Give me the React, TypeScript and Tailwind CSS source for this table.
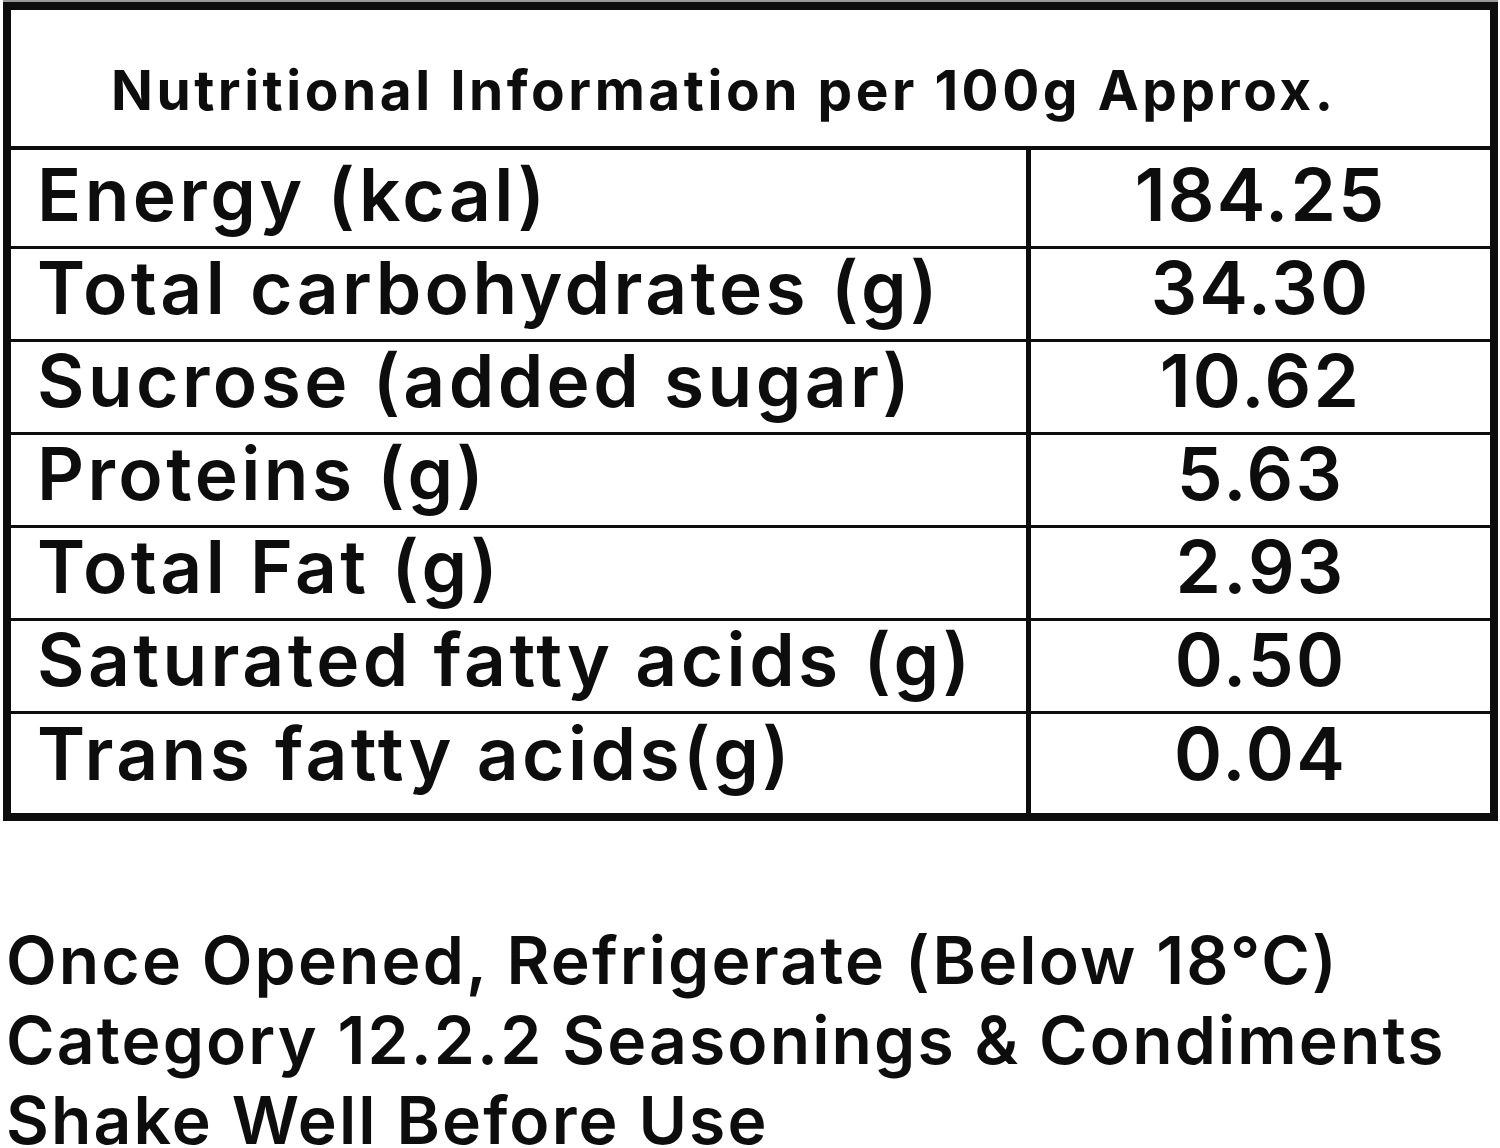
const rows: { label: string; value: string; rowCls: string; padCls: string }[] = [
  { label: "Energy (kcal)", value: "184.25", rowCls: "h-[99px] border-b-[3px]", padCls: "pt-[7px]" },
  { label: "Total carbohydrates (g)", value: "34.30", rowCls: "h-[93px] border-b-[3px]", padCls: "pt-[1px]" },
  { label: "Sucrose (added sugar)", value: "10.62", rowCls: "h-[93px] border-b-[3px]", padCls: "pt-[1px]" },
  { label: "Proteins (g)", value: "5.63", rowCls: "h-[93px] border-b-[3px]", padCls: "pt-[1px]" },
  { label: "Total Fat (g)", value: "2.93", rowCls: "h-[93px] border-b-[3px]", padCls: "pt-[1px]" },
  { label: "Saturated fatty acids (g)", value: "0.50", rowCls: "h-[93px] border-b-[3px]", padCls: "pt-[1px]" },
  { label: "Trans fatty acids(g)", value: "0.04", rowCls: "h-[99px] border-b-0", padCls: "pt-[2px]" },
];

export default function App() {
  return (
    <div className="w-[1500px] h-[1148px] overflow-hidden bg-white text-[#0d0d0d] [font-family:Inter,sans-serif]">
      <div className="ml-[3px] w-[1495px] h-[2px] bg-[#9a9a9a]" />
      <div className="ml-[3px] w-[1495px] border-[8px] border-[#0d0d0d]">
        <div className="h-[140px] border-b-[4px] border-[#0d0d0d] pl-[100px] pt-[47px] text-[55px] leading-[66px] font-bold tracking-[0.064em] whitespace-nowrap">
          Nutritional Information per 100g Approx.
        </div>
        {rows.map((r) => (
          <div key={r.label} className={`flex border-[#0d0d0d] ${r.rowCls}`}>
            <div className={`w-[1020px] border-r-[5px] border-[#0d0d0d] pl-[26px] text-[73px] leading-[76px] font-semibold tracking-[0.047em] whitespace-nowrap ${r.padCls}`}>
              {r.label}
            </div>
            <div className={`flex-1 text-center text-[73px] leading-[76px] font-semibold tracking-[0.03em] whitespace-nowrap ${r.padCls}`}>
              {r.value}
            </div>
          </div>
        ))}
      </div>
      <div className="mt-[99px] pl-[6px] text-[66px] leading-[80px] font-semibold tracking-[0.032em] whitespace-nowrap">
        <div>Once Opened, Refrigerate (Below 18°C)</div>
        <div>Category 12.2.2 Seasonings &amp; Condiments</div>
        <div>Shake Well Before Use</div>
      </div>
    </div>
  );
}
